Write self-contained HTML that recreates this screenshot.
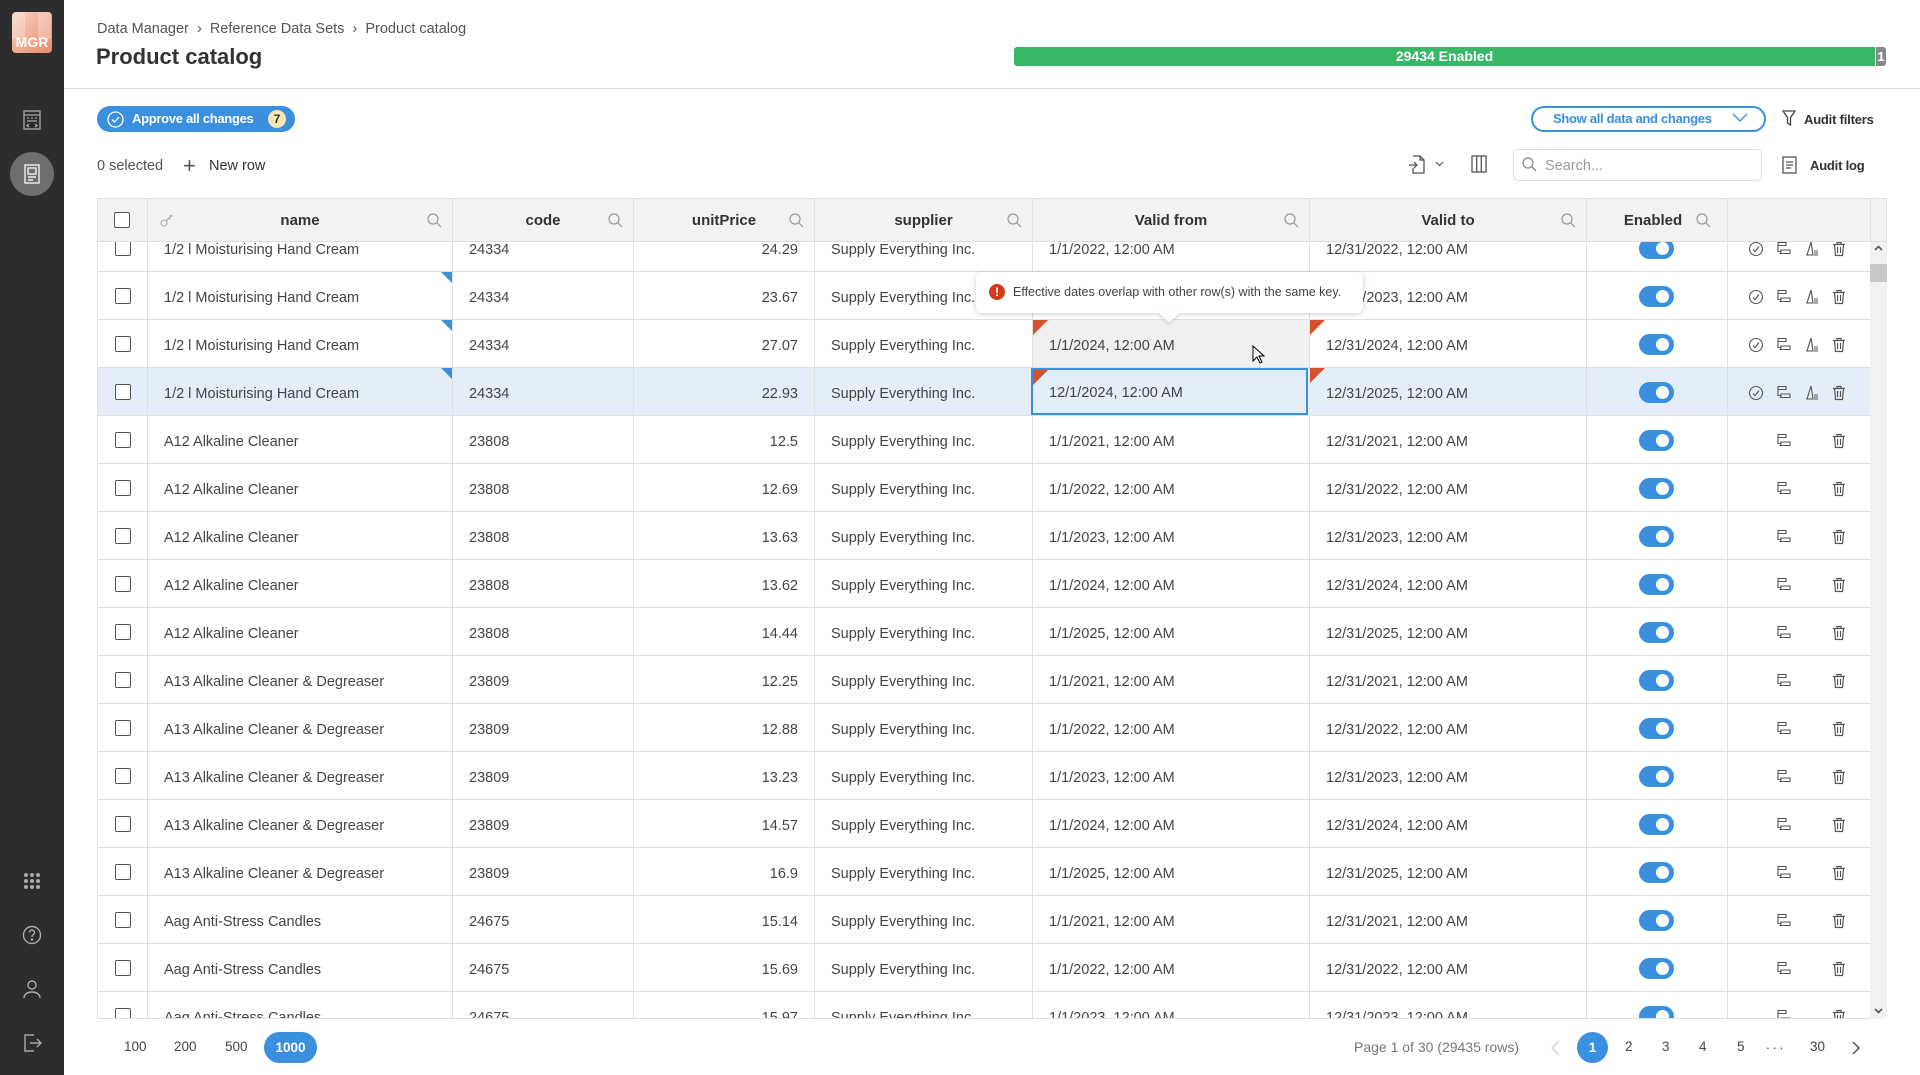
<!DOCTYPE html>
<html><head><meta charset="utf-8"><style>
*{box-sizing:border-box;margin:0;padding:0}
body{width:1920px;height:1075px;overflow:hidden;background:#fff;font-family:"Liberation Sans",sans-serif;color:#444;position:relative;font-size:15px}
.sb{position:absolute;left:0;top:0;width:64px;height:1075px;background:#2d2d2d}
.abs{position:absolute}
.hdr{position:absolute;left:97px;top:198px;width:1790px;height:44px;background:#f2f2f2;border:1px solid #e0e0e0;border-bottom:1px solid #ddd}
.hc{position:absolute;top:0;height:43px;border-right:1px solid #e0e0e0;font-weight:bold;color:#333;font-size:15px;line-height:43px;text-align:center}
.hc svg{position:absolute;right:10px;top:14px}
.body{position:absolute;left:97px;top:242px;width:1773px;height:777px;overflow:hidden;border-left:1px solid #e0e0e0;border-bottom:1px solid #e0e0e0}
.r{position:absolute;left:0;width:1773px;height:48px;border-bottom:1px solid #e0e0e0}
.c{position:absolute;top:0;height:47px;line-height:47px;padding-top:3px;border-right:1px solid #e0e0e0;padding-left:16px;white-space:nowrap;font-size:14.5px}
.c0{left:0;width:50px;padding:0}
.c1{left:50px;width:305px}
.c2{left:355px;width:181px}
.c3{left:536px;width:181px;text-align:right;padding-right:16px}
.c4{left:717px;width:218px}
.c5{left:935px;width:277px}
.c6{left:1212px;width:277px}
.c7{left:1489px;width:141px;padding:0}
.c8{left:1630px;width:143px;border-right:none;padding:0}
.cb{position:absolute;left:17px;top:16px;width:16px;height:16px;border:1.3px solid #555;border-radius:2px;background:#fff}
.tg{position:absolute;left:52px;top:14px;width:35px;height:21px;border-radius:11px;background:#3a8fde}
.tg:after{content:"";position:absolute;right:5px;top:4px;width:13px;height:13px;border-radius:50%;background:#fff}
.blue{position:absolute;right:0;top:0;width:0;height:0;border-top:11px solid #3a8fde;border-left:11px solid transparent}
.red{position:absolute;left:0;top:0;width:0;height:0;border-top:15px solid #d4532e;border-right:15px solid transparent}
.ic{position:absolute;top:17px}
</style></head><body>
<div class="sb">
 <div class="abs" style="left:12px;top:12px;width:40px;height:41px;border-radius:4px;background:linear-gradient(135deg,#f8d4c4,#e98a6a);color:#fff;font-size:14px;text-align:center;line-height:60px;font-weight:bold;overflow:hidden">
  <div class="abs" style="left:0;top:0;width:40px;height:27px;background:repeating-linear-gradient(90deg,rgba(255,255,255,.25) 0 13px,rgba(255,255,255,0) 13px 26px)"></div>MGR</div>
 <svg class="abs" style="left:22px;top:110px" width="20" height="20" viewBox="0 0 20 20" fill="none" stroke="#aaa" stroke-width="1.3"><rect x="2" y="1" width="16" height="18"/><path d="M2 5h16M5 8h2M9 8h2M13 8h2M5 11h10M7 14l-2 1.5 2 1.5M13 14l2 1.5-2 1.5"/></svg>
 <div class="abs" style="left:10px;top:152px;width:44px;height:44px;border-radius:50%;background:#6e6e6e"></div>
 <svg class="abs" style="left:22px;top:164px" width="20" height="20" viewBox="0 0 20 20" fill="none" stroke="#eee" stroke-width="1.4"><rect x="3" y="1" width="14" height="18"/><rect x="6" y="4" width="8" height="6"/><path d="M6 13h8M6 16h5"/></svg>
 <svg class="abs" style="left:22px;top:871px" width="20" height="20" viewBox="0 0 20 20" fill="#aaa"><circle cx="4" cy="4" r="2"/><circle cx="10" cy="4" r="2"/><circle cx="16" cy="4" r="2"/><circle cx="4" cy="10" r="2"/><circle cx="10" cy="10" r="2"/><circle cx="16" cy="10" r="2"/><circle cx="4" cy="16" r="2"/><circle cx="10" cy="16" r="2"/><circle cx="16" cy="16" r="2"/></svg>
 <svg class="abs" style="left:22px;top:925px" width="20" height="20" viewBox="0 0 20 20" fill="none" stroke="#aaa" stroke-width="1.4"><circle cx="10" cy="10" r="8.5"/><path d="M7.5 7.5a2.5 2.5 0 1 1 3.5 2.3c-.7.4-1 1-1 1.7v.5"/><circle cx="10" cy="14.5" r=".6" fill="#aaa"/></svg>
 <svg class="abs" style="left:22px;top:979px" width="20" height="20" viewBox="0 0 20 20" fill="none" stroke="#aaa" stroke-width="1.4"><circle cx="10" cy="6" r="4"/><path d="M2 19c0-4 4-6 8-6s8 2 8 6"/></svg>
 <svg class="abs" style="left:22px;top:1033px" width="20" height="20" viewBox="0 0 20 20" fill="none" stroke="#aaa" stroke-width="1.4"><path d="M12 2H3v16h9M8 10h11M15 6l4 4-4 4"/></svg>
</div>

<div class="abs" style="left:97px;top:21px;font-size:14.5px;color:#555">Data Manager &nbsp;›&nbsp; Reference Data Sets &nbsp;›&nbsp; Product catalog</div>
<div class="abs" style="left:96px;top:44px;font-size:22px;font-weight:bold;color:#333">Product catalog</div>
<div class="abs" style="left:1014px;top:47px;width:861px;height:19px;background:#37b866;border-radius:3px 0 0 3px;color:#fff;font-weight:bold;font-size:14px;text-align:center;line-height:19px">29434 Enabled</div>
<div class="abs" style="left:1876px;top:47px;width:10px;height:19px;background:#888;color:#fff;font-size:13px;font-weight:bold;text-align:center;line-height:19px;border-radius:0 3px 3px 0">1</div>
<div class="abs" style="left:64px;top:88px;width:1856px;height:1px;background:#ddd"></div>

<div class="abs" style="left:97px;top:106px;width:198px;height:26px;border-radius:13px;background:#3a8fde;color:#fff;font-weight:bold;font-size:13px;letter-spacing:-0.3px;line-height:26px;padding-left:35px">Approve all changes</div>
<svg class="abs" style="left:107px;top:111px" width="17" height="17" viewBox="0 0 17 17" fill="none" stroke="#fff" stroke-width="1.3"><circle cx="8.5" cy="8.5" r="7.5"/><path d="M5 8.5l2.5 2.5 4.5-5"/></svg>
<div class="abs" style="left:268px;top:110px;width:18px;height:18px;border-radius:50%;background:#f8e7b0;color:#333;font-size:12px;font-weight:bold;text-align:center;line-height:18px">7</div>

<div class="abs" style="left:1531px;top:106px;width:235px;height:26px;border:2px solid #3a8fde;border-radius:13px;color:#3a8fde;font-weight:bold;font-size:13px;letter-spacing:-0.3px;line-height:22px;padding-left:20px">Show all data and changes</div>
<svg class="abs" style="left:1732px;top:113px" width="16" height="10" viewBox="0 0 16 10" fill="none" stroke="#3a8fde" stroke-width="1.4"><path d="M1 1l7 7 7-7"/></svg>
<svg class="abs" style="left:1782px;top:110px" width="14" height="17" viewBox="0 0 14 17" fill="none" stroke="#444" stroke-width="1.3"><path d="M1 1h12L8.5 7.5V15l-3-2V7.5z"/></svg>
<div class="abs" style="left:1804px;top:112px;font-weight:bold;font-size:13px;letter-spacing:-0.2px;color:#333">Audit filters</div>

<div class="abs" style="left:97px;top:158px;font-size:14.5px;color:#555">0 selected</div>
<div class="abs" style="left:183px;top:153px;font-size:22px;color:#555;font-weight:300">+</div>
<div class="abs" style="left:209px;top:158px;font-size:14.5px;color:#333">New row</div>
<svg class="abs" style="left:1408px;top:155px" width="18" height="20" viewBox="0 0 18 20" fill="none" stroke="#555" stroke-width="1.3"><path d="M5 1h7l4 4v13H5v-5M12 1v4h4M1 10h8M6 7l3 3-3 3"/></svg>
<svg class="abs" style="left:1435px;top:161px" width="9" height="6" viewBox="0 0 9 6" fill="none" stroke="#555" stroke-width="1.2"><path d="M1 1l3.5 3.5L8 1"/></svg>
<svg class="abs" style="left:1471px;top:155px" width="16" height="18" viewBox="0 0 16 18" fill="none" stroke="#555" stroke-width="1.3"><rect x="1" y="1" width="14" height="16"/><path d="M5.7 1v16M10.3 1v16"/></svg>
<div class="abs" style="left:1513px;top:149px;width:249px;height:32px;border:1px solid #ddd;border-radius:5px;padding-left:31px;line-height:32px;color:#999;font-size:14.5px">Search...</div>
<svg class="abs" style="left:1522px;top:157px" width="15" height="15" viewBox="0 0 15 15" fill="none" stroke="#888" stroke-width="1.3"><circle cx="6" cy="6" r="5"/><path d="M10 10l4 4"/></svg>
<svg class="abs" style="left:1782px;top:156px" width="15" height="18" viewBox="0 0 15 18" fill="none" stroke="#555" stroke-width="1.3"><rect x="1" y="1" width="13" height="16"/><path d="M4 6h7M4 9h7M4 12h5"/></svg>
<div class="abs" style="left:1810px;top:158px;font-weight:bold;font-size:13px;letter-spacing:-0.2px;color:#333">Audit log</div>

<svg width="0" height="0" style="position:absolute"><defs>
<symbol id="q" viewBox="0 0 15 15"><g fill="none" stroke="#999" stroke-width="1.2"><circle cx="6" cy="6" r="5"/><path d="M10 10l4 4"/></g></symbol>
<symbol id="ok" viewBox="0 0 16 16"><g fill="none" stroke="#555" stroke-width="1.1"><circle cx="8" cy="8" r="6.5"/><path d="M5 8.5l2 2 4-5"/></g></symbol>
<symbol id="cp" viewBox="0 0 16 16"><g fill="none" stroke="#555" stroke-width="1.1"><path d="M2 1.5h8v3H2zM2 4.5v6h3M5 9h9v3.5H5zM4 12l1 1"/></g></symbol>
<symbol id="br" viewBox="0 0 16 16"><g fill="none" stroke="#555" stroke-width="1.1"><path d="M7 1L3 14h6L7 1M3 14h-1M10 10h4M10 12h4M10 14h4"/></g></symbol>
<symbol id="tr" viewBox="0 0 16 16"><g fill="none" stroke="#555" stroke-width="1.2"><path d="M2 3.5h12M6 3.5V1.5h4v2M3.5 3.5l1 11h7l1-11M6.5 6v6M9.5 6v6"/></g></symbol>
</defs></svg>

<div class="hdr">
 <div class="hc" style="left:0;width:50px"><div class="cb" style="left:16px;top:13px"></div></div>
 <div class="hc" style="left:50px;width:305px">name<svg style="position:absolute;left:12px;top:14px" width="14" height="14" viewBox="0 0 14 14" fill="none" stroke="#aaa" stroke-width="1.1"><circle cx="4" cy="10" r="3"/><path d="M6 8l6-6M10 2l2 2M9 5l1.5 1.5"/></svg><svg width="15" height="15"><use href="#q"/></svg></div>
 <div class="hc" style="left:355px;width:181px">code<svg width="15" height="15"><use href="#q"/></svg></div>
 <div class="hc" style="left:536px;width:181px">unitPrice<svg width="15" height="15"><use href="#q"/></svg></div>
 <div class="hc" style="left:717px;width:218px">supplier<svg width="15" height="15"><use href="#q"/></svg></div>
 <div class="hc" style="left:935px;width:277px">Valid from<svg width="15" height="15"><use href="#q"/></svg></div>
 <div class="hc" style="left:1212px;width:277px">Valid to<svg width="15" height="15"><use href="#q"/></svg></div>
 <div class="hc" style="left:1489px;width:141px;padding-right:8px">Enabled<svg style="right:16px" width="15" height="15"><use href="#q"/></svg></div>
 <div class="hc" style="left:1630px;width:143px"></div>
</div>

<div class="body">
<div class="r" style="top:-18px"><div class="c c0"><div class="cb"></div></div><div class="c c1">1/2 l Moisturising Hand Cream</div><div class="c c2">24334</div><div class="c c3">24.29</div><div class="c c4">Supply Everything Inc.</div><div class="c c5">1/1/2022, 12:00 AM</div><div class="c c6">12/31/2022, 12:00 AM</div><div class="c c7"><div class="tg"></div></div><div class="c c8"><svg class="ic" style="left:20px" width="16" height="16"><use href="#ok"/></svg><svg class="ic" style="left:48px" width="16" height="16"><use href="#cp"/></svg><svg class="ic" style="left:76px" width="16" height="16"><use href="#br"/></svg><svg class="ic" style="left:103px" width="16" height="16"><use href="#tr"/></svg></div></div>
<div class="r" style="top:30px"><div class="c c0"><div class="cb"></div></div><div class="c c1">1/2 l Moisturising Hand Cream<div class="blue"></div></div><div class="c c2">24334</div><div class="c c3">23.67</div><div class="c c4">Supply Everything Inc.</div><div class="c c5">1/1/2023, 12:00 AM</div><div class="c c6">12/31/2023, 12:00 AM</div><div class="c c7"><div class="tg"></div></div><div class="c c8"><svg class="ic" style="left:20px" width="16" height="16"><use href="#ok"/></svg><svg class="ic" style="left:48px" width="16" height="16"><use href="#cp"/></svg><svg class="ic" style="left:76px" width="16" height="16"><use href="#br"/></svg><svg class="ic" style="left:103px" width="16" height="16"><use href="#tr"/></svg></div></div>
<div class="r" style="top:78px"><div class="c c0"><div class="cb"></div></div><div class="c c1">1/2 l Moisturising Hand Cream<div class="blue"></div></div><div class="c c2">24334</div><div class="c c3">27.07</div><div class="c c4">Supply Everything Inc.</div><div class="c c5" style="background:#f0f0f0">1/1/2024, 12:00 AM<div class="red"></div></div><div class="c c6">12/31/2024, 12:00 AM<div class="red"></div></div><div class="c c7"><div class="tg"></div></div><div class="c c8"><svg class="ic" style="left:20px" width="16" height="16"><use href="#ok"/></svg><svg class="ic" style="left:48px" width="16" height="16"><use href="#cp"/></svg><svg class="ic" style="left:76px" width="16" height="16"><use href="#br"/></svg><svg class="ic" style="left:103px" width="16" height="16"><use href="#tr"/></svg></div></div>
<div class="r" style="top:126px;background:#e3eef9"><div class="c c0"><div class="cb"></div></div><div class="c c1">1/2 l Moisturising Hand Cream<div class="blue"></div></div><div class="c c2">24334</div><div class="c c3">22.93</div><div class="c c4">Supply Everything Inc.</div><div class="c c5" style="left:933px;border:2px solid #3a8fde;line-height:41px;padding-left:16px">12/1/2024, 12:00 AM<div class="red"></div></div><div class="c c6">12/31/2025, 12:00 AM<div class="red"></div></div><div class="c c7"><div class="tg"></div></div><div class="c c8"><svg class="ic" style="left:20px" width="16" height="16"><use href="#ok"/></svg><svg class="ic" style="left:48px" width="16" height="16"><use href="#cp"/></svg><svg class="ic" style="left:76px" width="16" height="16"><use href="#br"/></svg><svg class="ic" style="left:103px" width="16" height="16"><use href="#tr"/></svg></div></div>
<div class="r" style="top:174px"><div class="c c0"><div class="cb"></div></div><div class="c c1">A12 Alkaline Cleaner</div><div class="c c2">23808</div><div class="c c3">12.5</div><div class="c c4">Supply Everything Inc.</div><div class="c c5">1/1/2021, 12:00 AM</div><div class="c c6">12/31/2021, 12:00 AM</div><div class="c c7"><div class="tg"></div></div><div class="c c8"><svg class="ic" style="left:48px" width="16" height="16"><use href="#cp"/></svg><svg class="ic" style="left:103px" width="16" height="16"><use href="#tr"/></svg></div></div>
<div class="r" style="top:222px"><div class="c c0"><div class="cb"></div></div><div class="c c1">A12 Alkaline Cleaner</div><div class="c c2">23808</div><div class="c c3">12.69</div><div class="c c4">Supply Everything Inc.</div><div class="c c5">1/1/2022, 12:00 AM</div><div class="c c6">12/31/2022, 12:00 AM</div><div class="c c7"><div class="tg"></div></div><div class="c c8"><svg class="ic" style="left:48px" width="16" height="16"><use href="#cp"/></svg><svg class="ic" style="left:103px" width="16" height="16"><use href="#tr"/></svg></div></div>
<div class="r" style="top:270px"><div class="c c0"><div class="cb"></div></div><div class="c c1">A12 Alkaline Cleaner</div><div class="c c2">23808</div><div class="c c3">13.63</div><div class="c c4">Supply Everything Inc.</div><div class="c c5">1/1/2023, 12:00 AM</div><div class="c c6">12/31/2023, 12:00 AM</div><div class="c c7"><div class="tg"></div></div><div class="c c8"><svg class="ic" style="left:48px" width="16" height="16"><use href="#cp"/></svg><svg class="ic" style="left:103px" width="16" height="16"><use href="#tr"/></svg></div></div>
<div class="r" style="top:318px"><div class="c c0"><div class="cb"></div></div><div class="c c1">A12 Alkaline Cleaner</div><div class="c c2">23808</div><div class="c c3">13.62</div><div class="c c4">Supply Everything Inc.</div><div class="c c5">1/1/2024, 12:00 AM</div><div class="c c6">12/31/2024, 12:00 AM</div><div class="c c7"><div class="tg"></div></div><div class="c c8"><svg class="ic" style="left:48px" width="16" height="16"><use href="#cp"/></svg><svg class="ic" style="left:103px" width="16" height="16"><use href="#tr"/></svg></div></div>
<div class="r" style="top:366px"><div class="c c0"><div class="cb"></div></div><div class="c c1">A12 Alkaline Cleaner</div><div class="c c2">23808</div><div class="c c3">14.44</div><div class="c c4">Supply Everything Inc.</div><div class="c c5">1/1/2025, 12:00 AM</div><div class="c c6">12/31/2025, 12:00 AM</div><div class="c c7"><div class="tg"></div></div><div class="c c8"><svg class="ic" style="left:48px" width="16" height="16"><use href="#cp"/></svg><svg class="ic" style="left:103px" width="16" height="16"><use href="#tr"/></svg></div></div>
<div class="r" style="top:414px"><div class="c c0"><div class="cb"></div></div><div class="c c1">A13 Alkaline Cleaner &amp; Degreaser</div><div class="c c2">23809</div><div class="c c3">12.25</div><div class="c c4">Supply Everything Inc.</div><div class="c c5">1/1/2021, 12:00 AM</div><div class="c c6">12/31/2021, 12:00 AM</div><div class="c c7"><div class="tg"></div></div><div class="c c8"><svg class="ic" style="left:48px" width="16" height="16"><use href="#cp"/></svg><svg class="ic" style="left:103px" width="16" height="16"><use href="#tr"/></svg></div></div>
<div class="r" style="top:462px"><div class="c c0"><div class="cb"></div></div><div class="c c1">A13 Alkaline Cleaner &amp; Degreaser</div><div class="c c2">23809</div><div class="c c3">12.88</div><div class="c c4">Supply Everything Inc.</div><div class="c c5">1/1/2022, 12:00 AM</div><div class="c c6">12/31/2022, 12:00 AM</div><div class="c c7"><div class="tg"></div></div><div class="c c8"><svg class="ic" style="left:48px" width="16" height="16"><use href="#cp"/></svg><svg class="ic" style="left:103px" width="16" height="16"><use href="#tr"/></svg></div></div>
<div class="r" style="top:510px"><div class="c c0"><div class="cb"></div></div><div class="c c1">A13 Alkaline Cleaner &amp; Degreaser</div><div class="c c2">23809</div><div class="c c3">13.23</div><div class="c c4">Supply Everything Inc.</div><div class="c c5">1/1/2023, 12:00 AM</div><div class="c c6">12/31/2023, 12:00 AM</div><div class="c c7"><div class="tg"></div></div><div class="c c8"><svg class="ic" style="left:48px" width="16" height="16"><use href="#cp"/></svg><svg class="ic" style="left:103px" width="16" height="16"><use href="#tr"/></svg></div></div>
<div class="r" style="top:558px"><div class="c c0"><div class="cb"></div></div><div class="c c1">A13 Alkaline Cleaner &amp; Degreaser</div><div class="c c2">23809</div><div class="c c3">14.57</div><div class="c c4">Supply Everything Inc.</div><div class="c c5">1/1/2024, 12:00 AM</div><div class="c c6">12/31/2024, 12:00 AM</div><div class="c c7"><div class="tg"></div></div><div class="c c8"><svg class="ic" style="left:48px" width="16" height="16"><use href="#cp"/></svg><svg class="ic" style="left:103px" width="16" height="16"><use href="#tr"/></svg></div></div>
<div class="r" style="top:606px"><div class="c c0"><div class="cb"></div></div><div class="c c1">A13 Alkaline Cleaner &amp; Degreaser</div><div class="c c2">23809</div><div class="c c3">16.9</div><div class="c c4">Supply Everything Inc.</div><div class="c c5">1/1/2025, 12:00 AM</div><div class="c c6">12/31/2025, 12:00 AM</div><div class="c c7"><div class="tg"></div></div><div class="c c8"><svg class="ic" style="left:48px" width="16" height="16"><use href="#cp"/></svg><svg class="ic" style="left:103px" width="16" height="16"><use href="#tr"/></svg></div></div>
<div class="r" style="top:654px"><div class="c c0"><div class="cb"></div></div><div class="c c1">Aag Anti-Stress Candles</div><div class="c c2">24675</div><div class="c c3">15.14</div><div class="c c4">Supply Everything Inc.</div><div class="c c5">1/1/2021, 12:00 AM</div><div class="c c6">12/31/2021, 12:00 AM</div><div class="c c7"><div class="tg"></div></div><div class="c c8"><svg class="ic" style="left:48px" width="16" height="16"><use href="#cp"/></svg><svg class="ic" style="left:103px" width="16" height="16"><use href="#tr"/></svg></div></div>
<div class="r" style="top:702px"><div class="c c0"><div class="cb"></div></div><div class="c c1">Aag Anti-Stress Candles</div><div class="c c2">24675</div><div class="c c3">15.69</div><div class="c c4">Supply Everything Inc.</div><div class="c c5">1/1/2022, 12:00 AM</div><div class="c c6">12/31/2022, 12:00 AM</div><div class="c c7"><div class="tg"></div></div><div class="c c8"><svg class="ic" style="left:48px" width="16" height="16"><use href="#cp"/></svg><svg class="ic" style="left:103px" width="16" height="16"><use href="#tr"/></svg></div></div>
<div class="r" style="top:750px"><div class="c c0"><div class="cb"></div></div><div class="c c1">Aag Anti-Stress Candles</div><div class="c c2">24675</div><div class="c c3">15.97</div><div class="c c4">Supply Everything Inc.</div><div class="c c5">1/1/2023, 12:00 AM</div><div class="c c6">12/31/2023, 12:00 AM</div><div class="c c7"><div class="tg"></div></div><div class="c c8"><svg class="ic" style="left:48px" width="16" height="16"><use href="#cp"/></svg><svg class="ic" style="left:103px" width="16" height="16"><use href="#tr"/></svg></div></div>
</div>

<div class="abs" style="left:1870px;top:242px;width:17px;height:777px;background:#f1f1f1;border-bottom-right-radius:6px"></div>
<svg class="abs" style="left:1874px;top:245px" width="9" height="6" viewBox="0 0 9 6" fill="none" stroke="#555" stroke-width="1.6"><path d="M1 5l3.5-3.5L8 5"/></svg>
<div class="abs" style="left:1870px;top:264px;width:17px;height:18px;background:#c8c8c8"></div>
<svg class="abs" style="left:1874px;top:1008px" width="9" height="6" viewBox="0 0 9 6" fill="none" stroke="#555" stroke-width="1.6"><path d="M1 1l3.5 3.5L8 1"/></svg>

<div class="abs" style="left:976px;top:272px;width:387px;height:41px;background:#fff;border-radius:6px;box-shadow:0 1px 6px rgba(0,0,0,.2);font-size:12.5px;color:#444;line-height:41px;padding-left:37px">Effective dates overlap with other row(s) with the same key.</div>
<div class="abs" style="left:1162px;top:306px;width:14px;height:14px;background:#fff;transform:rotate(45deg);box-shadow:2px 2px 3px rgba(0,0,0,.1)"></div>
<div class="abs" style="left:989px;top:284px;width:16px;height:16px;border-radius:50%;background:#d23a1a;color:#fff;font-size:12px;font-weight:bold;text-align:center;line-height:16px">!</div>
<svg class="abs" style="left:1252px;top:345px" width="14" height="20" viewBox="0 0 14 20"><path d="M1 1v15l4-4 3 6 2-1-3-6h5z" fill="#fff" stroke="#000" stroke-width="1"/></svg>

<div class="abs" style="left:124px;top:1039px;font-size:13.5px;color:#444">100</div>
<div class="abs" style="left:174px;top:1039px;font-size:13.5px;color:#444">200</div>
<div class="abs" style="left:225px;top:1039px;font-size:13.5px;color:#444">500</div>
<div class="abs" style="left:264px;top:1032px;width:53px;height:31px;border-radius:16px;background:#3a8fde;color:#fff;font-size:13.5px;font-weight:bold;text-align:center;line-height:31px">1000</div>
<div class="abs" style="left:1354px;top:1039px;font-size:14px;color:#777">Page 1 of 30 (29435 rows)</div>
<svg class="abs" style="left:1551px;top:1041px" width="8" height="14" viewBox="0 0 8 14" fill="none" stroke="#ccc" stroke-width="1.3"><path d="M7 1L1 7l6 6"/></svg>
<div class="abs" style="left:1577px;top:1032px;width:31px;height:31px;border-radius:50%;background:#3a8fde;color:#fff;font-size:13.5px;font-weight:bold;text-align:center;line-height:31px">1</div>
<div class="abs" style="left:1625px;top:1039px;font-size:13.5px">2</div>
<div class="abs" style="left:1662px;top:1039px;font-size:13.5px">3</div>
<div class="abs" style="left:1699px;top:1039px;font-size:13.5px">4</div>
<div class="abs" style="left:1737px;top:1039px;font-size:13.5px">5</div>
<div class="abs" style="left:1766px;top:1037px;font-size:13.5px;letter-spacing:3px">...</div>
<div class="abs" style="left:1810px;top:1039px;font-size:13.5px">30</div>
<svg class="abs" style="left:1852px;top:1041px" width="8" height="14" viewBox="0 0 8 14" fill="none" stroke="#444" stroke-width="1.3"><path d="M1 1l6 6-6 6"/></svg>
</body></html>
